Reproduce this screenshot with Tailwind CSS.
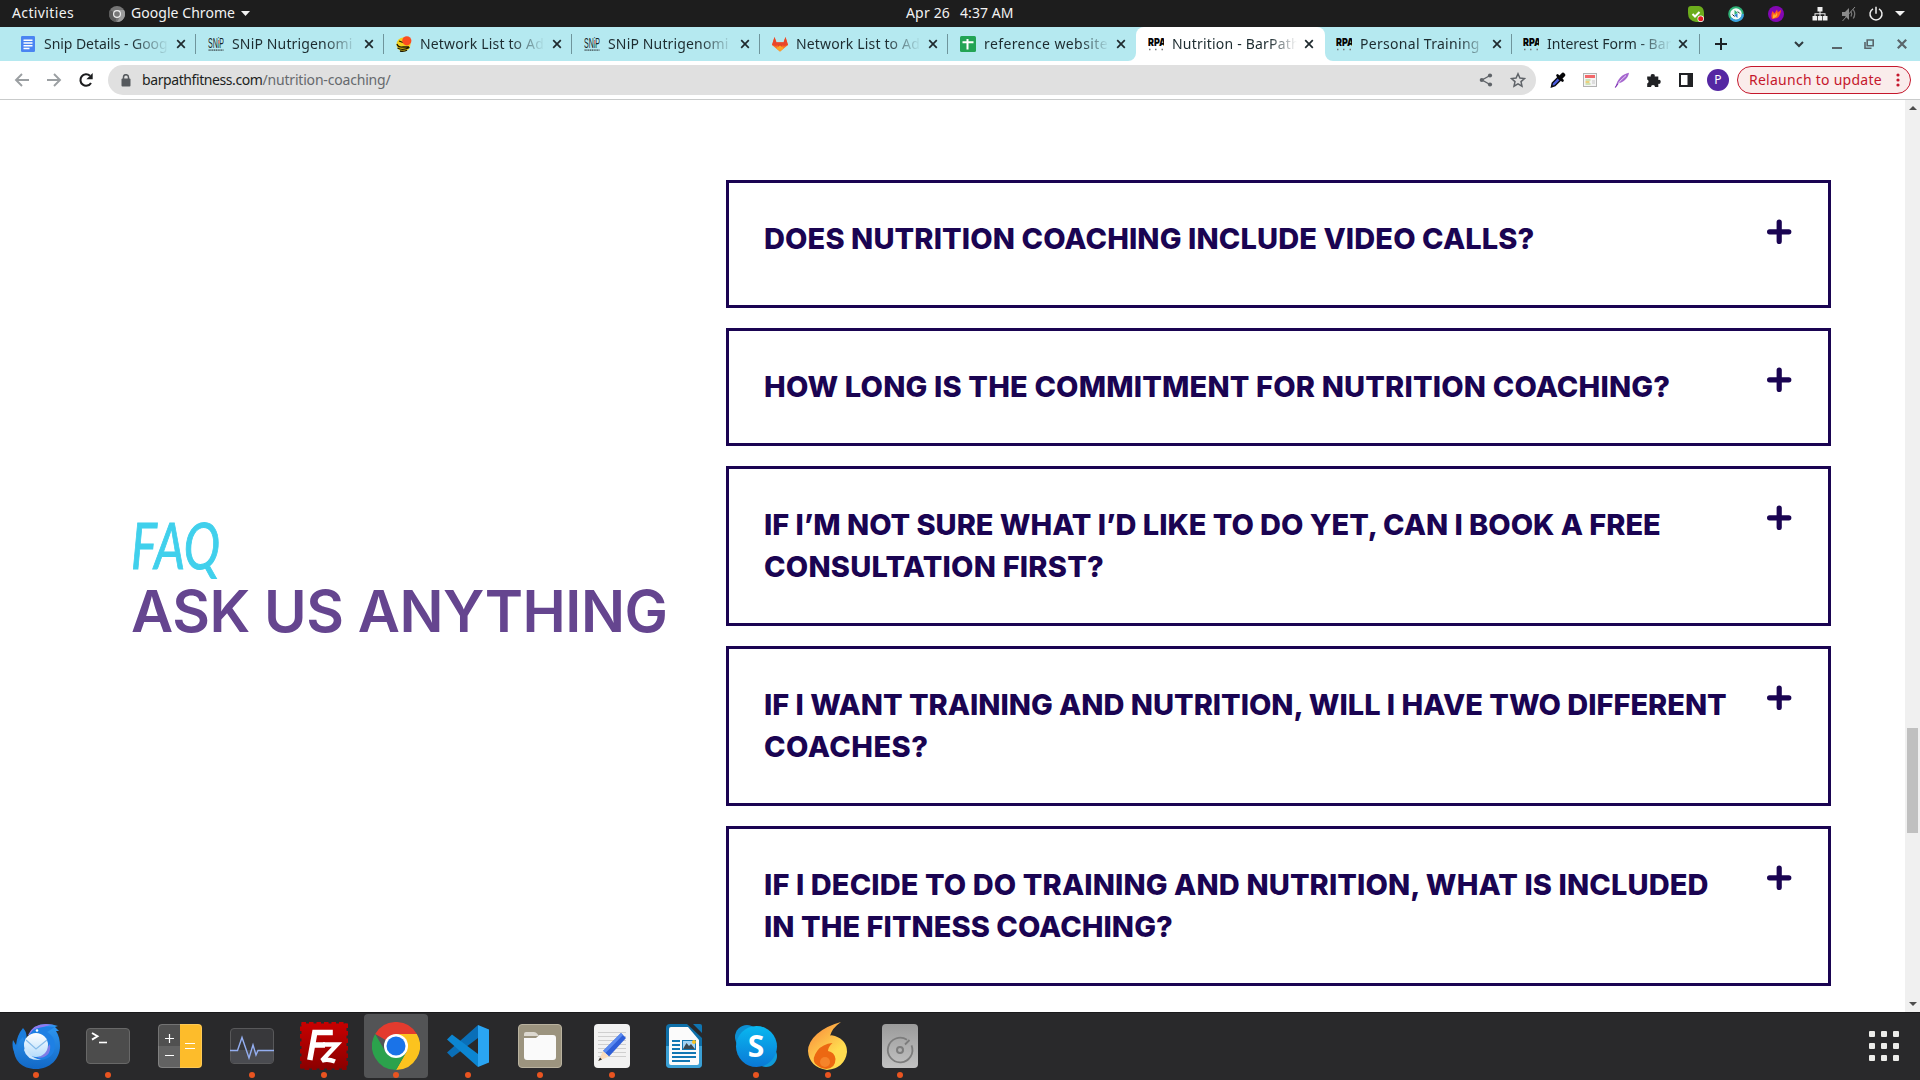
<!DOCTYPE html>
<html lang="en">
<head>
<meta charset="utf-8">
<title>Nutrition - BarPath Fitness</title>
<script src="https://cdn.jsdelivr.net/npm/@tailwindcss/browser@4"></script>
</head>
<body class="flex h-screen w-screen flex-col overflow-hidden bg-white font-['Noto_Sans',sans-serif] text-[14px]">

<!-- shared symbols -->
<svg class="hidden">
  <symbol id="x" viewBox="0 0 10 10"><path d="M1.2 1.2l7.6 7.6M8.800 1.2l-7.600 7.600" stroke="#1f2a2e" stroke-width="1.7" fill="none"/></symbol>
  <symbol id="plus" viewBox="0 0 25 25"><path d="M12.200 3v19.500M2.600 12.800h19.200" stroke="#1a0452" stroke-width="5.200" stroke-linecap="round"/></symbol>
  <symbol id="snip" viewBox="0 0 16 16">
    <text x="0" y="11.500" font-family="Liberation Sans" font-size="14" textLength="16" lengthAdjust="spacingAndGlyphs" fill="#16262a">SNiP</text>
    <path d="M11 4.500v3" stroke="#e58a78" stroke-width="1.500"/><path d="M10.500 8.500l2 2" stroke="#5fbf9b" stroke-width="1.500"/>
    <path d="M.5 14.200h15" stroke="#5c7479" stroke-width="1.800" stroke-dasharray="1.300 .5"/>
  </symbol>
  <symbol id="bpa" viewBox="0 0 16 16">
    <text x="0" y="9.500" font-family="Inter" font-weight="900" font-size="11" textLength="18" lengthAdjust="spacingAndGlyphs" fill="#050505">RPA</text>
    <path d="M1 13.500h1.500M7 13.500h1.500M13.500 13.500h1.500" stroke="#777" stroke-width="1.500"/>
  </symbol>
</svg>

<!-- desktop top bar -->
<header class="flex h-[27px] shrink-0 items-center bg-[#1d1d1d] text-[#f2f2f2]">
  <div class="flex w-[906px] items-center">
    <span class="-mt-0.5 ml-3 w-[97px] tracking-[0.37px]">Activities</span>
    <svg class="mr-[6px] size-[16px] shrink-0" viewBox="0 0 16 16"><circle cx="8" cy="8" r="8" fill="#767676"/><path d="M8 8L1 4a8 8 0 0 0 5.500 11.900z" fill="#5c5c5c"/><path d="M8 4h7a8 8 0 0 1-7 12l3.500-6z" fill="#9b9b9b"/><circle cx="8" cy="8" r="4" fill="#eee"/><circle cx="8" cy="8" r="2.800" fill="#777"/></svg>
    <span class="-mt-0.5 tracking-[0.05px]">Google Chrome</span>
    <svg class="ml-[6px] h-[5px] w-[9px]" viewBox="0 0 9 5"><path d="M0 0h9L4.500 5z" fill="#f2f2f2"/></svg>
  </div>
  <div class="-mt-0.5 flex gap-[10px]"><span class="tracking-[0.17px]">Apr 26</span><span class="tracking-[0.06px]">4:37 AM</span></div>
  <div class="flex flex-1 items-center justify-end pr-[15px]">
    <svg class="mr-[24px] size-[16px]" viewBox="0 0 16 16"><path d="M3 0h8q5 1 5 7v5q-1 4-5 4H8Q0 15 0 7V3Q0 0 3 0z" fill="#6cac1c"/><path d="M4.500 8l2.500 2.500L11.500 6" stroke="#fff" stroke-width="2" fill="none"/><circle cx="12.700" cy="12.700" r="3.200" fill="#fff"/><circle cx="12.700" cy="12.700" r="2.500" fill="#e51c23"/></svg>
    <svg class="mr-[24px] size-[16px]" viewBox="0 0 16 16"><circle cx="8" cy="8" r="6.800" fill="#f5fafa" stroke="#2fb277" stroke-width="2"/><path d="M14.800 8a6.800 6.800 0 0 1-12 4.300" fill="none" stroke="#3b9fe0" stroke-width="2.200"/><path d="M6.500 4l3.500 3-3.500 1.500z" fill="#2fb277"/><path d="M9.500 12L6 9l3.500-1.500z" fill="#2a86d6"/><path d="M4.500 8.500l2 2M9.800 5.500l2 2" stroke="#222" stroke-width="1"/></svg>
    <svg class="mr-[28px] size-[16px]" viewBox="0 0 16 16"><circle cx="8" cy="8" r="8" fill="#8407b4"/><path d="M4 13q-1.500-4 .5-8l2 2.500L9 3.500l.8 2.800L13 4q-.5 6-4 8z" fill="#ff5a1f"/><path d="M5 12.500q-.5-3 1-5l1 2 2-3q1 4-2 5z" fill="#ffb52e"/></svg>
    <svg class="mr-[13px] size-[16px]" viewBox="0 0 16 16" fill="#eee"><rect x="5.500" y="1" width="5" height="4.500"/><rect x="0.500" y="10" width="4.500" height="4.500"/><rect x="5.800" y="10" width="4.500" height="4.500" /><rect x="11" y="10" width="4.500" height="4.500"/><path d="M7.500 5h1v5h-1zM2.500 7.300h11v1h-11zM2.500 7.300h1V10h-1zM12.500 7.300h1V10h-1z"/></svg>
    <svg class="mr-[11px] size-[16px]" viewBox="0 0 16 16"><path d="M1 6h3l4-4v12l-4-4H1z" fill="#8a8a8a"/><path d="M10 5.500q1.500 2.500 0 5M12.200 3.500q3 4.500 0 9" fill="none" stroke="#777" stroke-width="1.300"/><path d="M1.500 15L14 1" stroke="#8a8a8a" stroke-width="1"/></svg>
    <svg class="mr-[11px] size-[16px]" viewBox="0 0 16 16"><path d="M5 2.800a6 6 0 1 0 6 0M8 .8v7" fill="none" stroke="#eee" stroke-width="1.500"/></svg>
    <svg class="h-[5px] w-[10px]" viewBox="0 0 10 5"><path d="M0 0h10L5 5z" fill="#f2f2f2"/></svg>
  </div>
</header>

<!-- tab strip -->
<nav class="flex h-[34px] shrink-0 bg-[#b5e9f0] pl-2 text-[#1d2c30]">
  <div class="flex w-[188px] shrink-0 items-center pl-3">
    <svg class="size-4 shrink-0" viewBox="0 0 16 16"><rect x="1" width="14" height="16" rx="1.200" fill="#4a84f2"/><path d="M3.500 4.200h9M3.500 7h9M3.500 9.800h9M3.500 12.500h6" stroke="#fff" stroke-width="1.400"/></svg>
    <span class="-mt-0.5 ml-2 w-[125px] overflow-hidden whitespace-nowrap tracking-[-0.06px] [mask-image:linear-gradient(to_right,black_70%,transparent)]">Snip Details - Goog</span>
    <svg class="ml-[7px] size-[10px] shrink-0"><use href="#x"/></svg><i class="ml-auto h-5 w-px bg-[#6f959c]"></i>
  </div>
  <div class="flex w-[188px] shrink-0 items-center pl-3">
    <svg class="size-4 shrink-0"><use href="#snip"/></svg>
    <span class="-mt-0.5 ml-2 w-[125px] overflow-hidden whitespace-nowrap tracking-[0.15px] [mask-image:linear-gradient(to_right,black_74%,transparent)]">SNiP Nutrigenomi</span>
    <svg class="ml-[7px] size-[10px] shrink-0"><use href="#x"/></svg><i class="ml-auto h-5 w-px bg-[#6f959c]"></i>
  </div>
  <div class="flex w-[188px] shrink-0 items-center pl-3">
    <svg class="size-4 shrink-0" viewBox="0 0 16 16"><circle cx="7.500" cy="8.500" r="7" fill="#f3d01c"/><path d="M1 8q1 3.500 6 3h6M1.500 12q5 3 12-.5M4 15q4 .8 7-.8M3 5l4 1.500" stroke="#1c1a05" stroke-width="1.300" fill="none"/><circle cx="10.800" cy="4.800" r="4.600" fill="#fb4c20"/></svg>
    <span class="-mt-0.5 ml-2 w-[125px] overflow-hidden whitespace-nowrap tracking-[0.16px] [mask-image:linear-gradient(to_right,black_72%,transparent)]">Network List to Ad</span>
    <svg class="ml-[7px] size-[10px] shrink-0"><use href="#x"/></svg><i class="ml-auto h-5 w-px bg-[#6f959c]"></i>
  </div>
  <div class="flex w-[188px] shrink-0 items-center pl-3">
    <svg class="size-4 shrink-0"><use href="#snip"/></svg>
    <span class="-mt-0.5 ml-2 w-[125px] overflow-hidden whitespace-nowrap tracking-[0.15px] [mask-image:linear-gradient(to_right,black_74%,transparent)]">SNiP Nutrigenomi</span>
    <svg class="ml-[7px] size-[10px] shrink-0"><use href="#x"/></svg><i class="ml-auto h-5 w-px bg-[#6f959c]"></i>
  </div>
  <div class="flex w-[188px] shrink-0 items-center pl-3">
    <svg class="size-4 shrink-0" viewBox="0 0 16 16"><path d="M0 9L2.500 1l2 5.500h7l2-5.500L16 9l-8 6.500z" fill="#fc6d26"/><path d="M4.500 6.500h7L8 15.500z" fill="#e24329"/><path d="M0 9L2.500 1l2 5.500h7l2-5.500L16 9l-4 1-4-2-4 2z" fill="#e8452b"/><path d="M4 12.200l4-2.700 4 2.700-4 3.300z" fill="#fca326"/></svg>
    <span class="-mt-0.5 ml-2 w-[125px] overflow-hidden whitespace-nowrap tracking-[0.16px] [mask-image:linear-gradient(to_right,black_72%,transparent)]">Network List to Ad</span>
    <svg class="ml-[7px] size-[10px] shrink-0"><use href="#x"/></svg><i class="ml-auto h-5 w-px bg-[#6f959c]"></i>
  </div>
  <div class="flex w-[188px] shrink-0 items-center pl-3">
    <svg class="size-4 shrink-0" viewBox="0 0 16 16"><rect width="16" height="16" rx="1.500" fill="#23a455"/><path d="M7.500 3v10.500M2.500 6.300h11" stroke="#fff" stroke-width="2"/></svg>
    <span class="-mt-0.5 ml-2 w-[125px] overflow-hidden whitespace-nowrap tracking-[0.4px] [mask-image:linear-gradient(to_right,black_78%,transparent)]">reference website</span>
    <svg class="ml-[7px] size-[10px] shrink-0"><use href="#x"/></svg>
  </div>
  <div class="relative flex w-[189px] shrink-0 items-center rounded-t-lg bg-white pl-3">
    <svg class="absolute bottom-0 -left-2 size-2" viewBox="0 0 8 8"><path d="M8 0v8H0a8 8 0 0 0 8-8z" fill="#fff"/></svg>
    <svg class="absolute -right-2 bottom-0 size-2" viewBox="0 0 8 8"><path d="M0 0v8h8a8 8 0 0 1-8-8z" fill="#fff"/></svg>
    <svg class="size-4 shrink-0"><use href="#bpa"/></svg>
    <span class="-mt-0.5 ml-2 w-[125px] overflow-hidden whitespace-nowrap tracking-[0.2px] [mask-image:linear-gradient(to_right,black_78%,transparent)]">Nutrition - BarPath</span>
    <svg class="ml-[7px] size-[10px] shrink-0"><use href="#x"/></svg>
  </div>
  <div class="flex w-[187px] shrink-0 items-center pl-[11px]">
    <svg class="size-4 shrink-0"><use href="#bpa"/></svg>
    <span class="-mt-0.5 ml-2 w-[125px] overflow-hidden whitespace-nowrap tracking-[0.3px] [mask-image:linear-gradient(to_right,black_80%,transparent)]">Personal Training</span>
    <svg class="ml-[7px] size-[10px] shrink-0"><use href="#x"/></svg><i class="ml-auto h-5 w-px bg-[#6f959c]"></i>
  </div>
  <div class="flex w-[188px] shrink-0 items-center pl-[11px]">
    <svg class="size-4 shrink-0"><use href="#bpa"/></svg>
    <span class="-mt-0.5 ml-2 w-[125px] overflow-hidden whitespace-nowrap [mask-image:linear-gradient(to_right,black_72%,transparent)]">Interest Form - Bar</span>
    <svg class="ml-[6px] size-[10px] shrink-0"><use href="#x"/></svg><i class="ml-auto h-5 w-px bg-[#6f959c]"></i>
  </div>
  <div class="flex flex-1 items-center pl-[15px]">
    <svg class="size-3" viewBox="0 0 12 12"><path d="M6 0v12M0 6h12" stroke="#1d2327" stroke-width="2"/></svg>
    <svg class="ml-[67px] h-[7px] w-[10px]" viewBox="0 0 10 7"><path d="M1 1l4 4 4-4" fill="none" stroke="#2f3b3f" stroke-width="2"/></svg>
    <svg class="ml-[28px] h-[10px] w-[10px]" viewBox="0 0 10 10"><path d="M0 9h10" stroke="#59656a" stroke-width="2"/></svg>
    <svg class="ml-[22px] h-[10px] w-[10px]" viewBox="0 0 10 10"><path d="M3.200 1h6v5.800h-6zM1 3v6.200h6.500" fill="none" stroke="#59656a" stroke-width="1.600"/></svg>
    <svg class="ml-[23px] size-[10px]" viewBox="0 0 10 10"><path d="M.8.8l8.400 8.400M9.200.8L.8 9.200" stroke="#59656a" stroke-width="2.200"/></svg>
  </div>
</nav>

<!-- toolbar -->
<div class="flex h-[39px] shrink-0 items-center border-b border-[#c9cbcb] bg-white pl-[14px]">
  <svg class="size-4" viewBox="0 0 16 16"><path d="M15 8H2.500M8 2L2 8l6 6" fill="none" stroke="#9b9fa2" stroke-width="1.900"/></svg>
  <svg class="ml-4 size-4" viewBox="0 0 16 16"><path d="M1 8h12.500M8 2l6 6-6 6" fill="none" stroke="#9b9fa2" stroke-width="1.900"/></svg>
  <svg class="ml-4 size-4" viewBox="0 0 16 16"><path d="M13 11a5.700 5.700 0 1 1-1-7.200" fill="none" stroke="#1b1c1e" stroke-width="2.100"/><path d="M14.700 1v6.300H8.400z" fill="#1b1c1e"/></svg>
  <div class="ml-[14px] flex h-[30px] w-[1428px] shrink-0 items-center rounded-full bg-[#e0e0e0] pl-[13px] pr-[10px]">
    <svg class="h-[13px] w-[10px]" viewBox="0 0 10 13"><rect x=".5" y="4.500" width="9" height="8" rx="1" fill="#565a5e"/><path d="M2.500 5V3.200a2.500 2.500 0 0 1 5 0V5" fill="none" stroke="#565a5e" stroke-width="1.500"/></svg>
    <span class="-mt-0.5 ml-[11px] tracking-[-0.41px] text-[#1d1f21]">barpathfitness.com</span><span class="-mt-0.5 flex-1 tracking-[-0.19px] text-[#66696d]">/nutrition-coaching/</span>
    <svg class="size-[14px]" viewBox="0 0 14 14"><path d="M11 2.500L3 7l8 4.500" fill="none" stroke="#5f6368" stroke-width="1.400"/><g fill="#5f6368"><circle cx="11" cy="2.500" r="2.100"/><circle cx="2.800" cy="7" r="2.100"/><circle cx="11" cy="11.500" r="2.100"/></g></svg>
    <svg class="ml-[17px] size-4" viewBox="0 0 16 16"><path d="M8 1.800l1.900 4.300 4.600.4-3.500 3.100 1 4.600-4-2.400-4 2.400 1-4.600L1.500 6.500l4.600-.4z" fill="none" stroke="#5f6368" stroke-width="1.500"/></svg>
  </div>
  <svg class="ml-[14px] size-4" viewBox="0 0 16 16"><path d="M1.500 14.800l.8-3.800L8.500 4.800l2.700 2.700-6.200 6.200z" fill="#4a5be0" stroke="#0a0a12" stroke-width="1.500"/><path d="M7.500 3.500l5 5" stroke="#050508" stroke-width="2.600" stroke-linecap="round"/><path d="M10 6L13 3" stroke="#050508" stroke-width="4.500" stroke-linecap="round"/></svg>
  <svg class="ml-4 size-4" viewBox="0 0 16 16"><rect x="1.500" y="1.500" width="13" height="13" fill="#f4f4f4" stroke="#b2b2b2"/><path d="M3 4.500h10" stroke="#f2686a" stroke-width="3"/><path d="M3.500 8h5M3.500 12h5" stroke="#a5cf7a" stroke-width="1.200"/><path d="M3.500 10h4" stroke="#e8b52c" stroke-width="1.200"/><path d="M10 8h3v4h-3z" fill="#ddd"/></svg>
  <svg class="ml-4 size-4" viewBox="0 0 16 16"><path d="M2 14C3 8 8 2 15 .8 14 7 9 10.500 4 11.500z" fill="#a566cf"/><path d="M1.500 15.500Q5 9 12 3.500" stroke="#ead7f5" stroke-width="1" fill="none"/><path d="M1.200 15.500L4 11.500" stroke="#7b2fb0" stroke-width="1.200"/></svg>
  <svg class="ml-4 size-4" viewBox="0 0 16 16"><path d="M1.200 4.500h3.600a2 2 0 1 1 3.900 0h3.600v3.400a2 2 0 1 1 0 3.900V15H9a2 2 0 0 0-4 0H1.200v-3.600a2 2 0 0 0 0-3.800z" fill="#202124"/></svg>
  <svg class="ml-4 size-4" viewBox="0 0 16 16"><rect x="2" y="2" width="12" height="12" fill="#fff" stroke="#202124" stroke-width="2"/><path d="M9.500 2H14v12H9.500z" fill="#202124"/></svg>
  <div class="ml-[13px] flex size-[22px] items-center justify-center rounded-full bg-[#5527a3] text-[12px] text-white">P</div>
  <div class="ml-2 flex h-7 w-[174px] items-center rounded-full border border-[#c5172c] bg-[#faeceb] pl-[11px] text-[#c5172c]">
    <span class="-mt-0.5 tracking-[0.26px]">Relaunch to update</span>
    <svg class="ml-[14px] h-[14px] w-[4px]" viewBox="0 0 4 14" fill="#c5172c"><circle cx="2" cy="2" r="1.600"/><circle cx="2" cy="7" r="1.600"/><circle cx="2" cy="12" r="1.600"/></svg>
  </div>
</div>

<!-- page -->
<main class="flex min-h-0 flex-1">
  <section class="flex w-[726px] flex-col pt-[417px] pl-[131px]">
    <p class="h-[67px] origin-left scale-x-[0.76] font-['Lato',sans-serif] text-[64px] leading-[56px] text-[#40d0ec] italic [-webkit-text-stroke:1px_#40d0ec]">FAQ</p>
    <h1 class="h-[54px] font-['Inter',sans-serif] text-[58px] leading-[54px] font-semibold tracking-[-0.44px] whitespace-nowrap text-[#65458f]">ASK US ANYTHING</h1>
  </section>
  <section class="flex w-[1105px] flex-col gap-5 pt-[80px] font-['Inter',sans-serif] text-[29px] leading-[42px] font-extrabold whitespace-nowrap text-[#1a0452]">
    <div class="flex h-[128px] shrink-0 justify-between border-3 border-[#1a0452] pt-[35px] pr-[36px] pl-[35px]">
      <h2 class="tracking-[0.11px]">DOES NUTRITION COACHING INCLUDE VIDEO CALLS?</h2>
      <svg class="mt-px size-[25px]"><use href="#plus"/></svg>
    </div>
    <div class="flex h-[118px] shrink-0 justify-between border-3 border-[#1a0452] pt-[35px] pr-[36px] pl-[35px]">
      <h2 class="tracking-[0.17px]">HOW LONG IS THE COMMITMENT FOR NUTRITION COACHING?</h2>
      <svg class="mt-px size-[25px]"><use href="#plus"/></svg>
    </div>
    <div class="flex h-[160px] shrink-0 justify-between border-3 border-[#1a0452] pt-[35px] pr-[36px] pl-[35px]">
      <h2 class="tracking-[-0.03px]">IF I’M NOT SURE WHAT I’D LIKE TO DO YET, CAN I BOOK A FREE<br><span class="tracking-[0.22px]">CONSULTATION FIRST?</span></h2>
      <svg class="mt-px size-[25px]"><use href="#plus"/></svg>
    </div>
    <div class="flex h-[160px] shrink-0 justify-between border-3 border-[#1a0452] pt-[35px] pr-[36px] pl-[35px]">
      <h2 class="tracking-[-0.02px]">IF I WANT TRAINING AND NUTRITION, WILL I HAVE TWO DIFFERENT<br><span class="tracking-[0.5px]">COACHES?</span></h2>
      <svg class="mt-px size-[25px]"><use href="#plus"/></svg>
    </div>
    <div class="flex h-[160px] shrink-0 justify-between border-3 border-[#1a0452] pt-[35px] pr-[36px] pl-[35px]">
      <h2 class="tracking-[0.11px]">IF I DECIDE TO DO TRAINING AND NUTRITION, WHAT IS INCLUDED<br><span class="tracking-[0.05px]">IN THE FITNESS COACHING?</span></h2>
      <svg class="mt-px size-[25px]"><use href="#plus"/></svg>
    </div>
  </section>
  <aside class="ml-auto flex w-[15px] flex-col items-center bg-[#f0f0f0] pt-[6px] pb-[6px]">
    <svg class="h-[4px] w-[8px]" viewBox="0 0 8 4"><path d="M0 4h8L4 0z" fill="#4d4d4d"/></svg>
    <div class="mt-[618px] h-[105px] w-[11px] bg-[#c0c0c0]"></div>
    <svg class="mt-auto h-[4px] w-[8px]" viewBox="0 0 8 4"><path d="M0 0h8L4 4z" fill="#4d4d4d"/></svg>
  </aside>
</main>

<!-- dock -->
<footer class="flex h-[68px] shrink-0 border-t border-[#1a1a1c] bg-[#29292b]">
  <div class="flex w-[72px] flex-col items-center pt-[9px]">
    <svg class="size-12" viewBox="0 0 48 48"><defs><linearGradient id="tb" x1="0" y1="0" x2="0" y2="1"><stop offset="0" stop-color="#2f98f2"/><stop offset="1" stop-color="#1268c6"/></linearGradient><linearGradient id="tw" x1="0" y1="0" x2="0" y2="1"><stop offset="0" stop-color="#fff"/><stop offset="1" stop-color="#b5dcfb"/></linearGradient></defs>
      <path d="M11 6q5 5 3 13l-2 8-7 8Q-1 27 1 18l3 5Q5 13 11 6z" fill="#1b7ddd"/>
      <path d="M17 13Q21 2 34 2q6 0 12 2l-3 1 4 4-3 0q4 6 4 15c0 13-10 23-24 23C10 47 1 38 2 25l3 4q0-9 6-14l2 6z" fill="url(#tb)"/>
      <path d="M16 13Q21 2 34 2l8 1q-9 0-14 5-5 5-12 5z" fill="#8f7af0"/>
      <path d="M17 13l4-5q10-5 22-3l-8 5q8 5 8 13 0 13-14 15-12 0-15-11z" fill="#1e80e4"/>
      <path d="M38 22q2 14-13 14 8-3 9-9z" fill="#7e7ce6"/>
      <circle cx="24" cy="23" r="12" fill="url(#tw)"/><path d="M14 24q0 10 15 14-14 1-17-10z" fill="#cfe7fc"/><path d="M14 18l10 9 11-9" fill="none" stroke="#87bce9" stroke-width="1.200"/><circle cx="25" cy="8.500" r="1.300" fill="#fff"/></svg>
    <i class="mt-[2px] size-[6px] rounded-full bg-[#e95420]"></i>
  </div>
  <div class="flex w-[72px] flex-col items-center pt-[9px]">
    <svg class="size-12" viewBox="0 0 48 48"><rect x="2.500" y="6.500" width="43" height="35" rx="3.500" fill="#4c4c4c" stroke="#686868"/><path d="M8 11l5.500 3.300L8 17.600" fill="none" stroke="#fff" stroke-width="1.900"/><path d="M15 20.500h8" stroke="#fff" stroke-width="1.600"/></svg>
    <i class="mt-[2px] size-[6px] rounded-full bg-[#e95420]"></i>
  </div>
  <div class="flex w-[72px] flex-col items-center pt-[9px]">
    <svg class="size-12" viewBox="0 0 48 48"><path d="M24 2H6a4 4 0 0 0-4 4v18h22z" fill="#505050"/><path d="M24 24H2v18a4 4 0 0 0 4 4h18z" fill="#626262"/><path d="M24 2h18a4 4 0 0 1 4 4v36a4 4 0 0 1-4 4H24z" fill="#fdbc2b"/><rect x="2.500" y="2.500" width="43" height="43" rx="3.500" fill="none" stroke="#fff" stroke-opacity=".2"/><path d="M13.500 12v9M9 16.500h9M9 33.500h9" stroke="#fff" stroke-width="1.200"/><path d="M29 21.500h10M29 26.500h10" stroke="#fff" stroke-width="1.200"/></svg>
  </div>
  <div class="flex w-[72px] flex-col items-center pt-[9px]">
    <svg class="size-12" viewBox="0 0 48 48"><rect x="2.500" y="6.500" width="43" height="35" rx="3.500" fill="#38383b" stroke="#58585a"/><path d="M3 28h42v10a3 3 0 0 1-3 3H6a3 3 0 0 1-3-3z" fill="#4a4b50"/><path d="M2 28.500h7.500l4.500-13 7 20.500 4-13 3 10 2-4.500H46" fill="none" stroke="#94aef0" stroke-width="1.400"/></svg>
    <i class="mt-[2px] size-[6px] rounded-full bg-[#e95420]"></i>
  </div>
  <div class="flex w-[72px] flex-col items-center pt-[9px]">
    <svg class="size-12" viewBox="0 0 48 48"><defs><linearGradient id="fz" x1="0" y1="0" x2="0" y2="1"><stop offset="0" stop-color="#c70000"/><stop offset="1" stop-color="#8c0000"/></linearGradient></defs><rect x="1.500" y="1.500" width="45" height="45" fill="url(#fz)"/><rect x="1.500" y="1.500" width="45" height="45" fill="none" stroke="url(#fz)" stroke-width="3.400" stroke-dasharray="4.500 3"/><path d="M9.800 38L14.800 10.500h18M12 23H25" fill="none" stroke="#fff" stroke-width="5.500"/><path d="M23 22.500h14L22 38.500q6-2 13 1" fill="none" stroke="#fff" stroke-width="4.500"/></svg>
    <i class="mt-[2px] size-[6px] rounded-full bg-[#e95420]"></i>
  </div>
  <div class="flex w-[72px] flex-col items-center pt-px">
    <div class="flex h-[64px] w-[64px] flex-col items-center rounded bg-[#535456] pt-[8px]">
    <svg class="size-12 shrink-0" viewBox="0 0 48 48"><path d="M24 24L3.200 12A24 24 0 0 1 44.800 12z" fill="#e33b2e"/><path d="M24 24L34.400 30 24 48A24 24 0 0 0 44.800 12H24z" fill="#fcc31e"/><path d="M24 48L34.400 30 13.600 30 3.200 12A24 24 0 0 0 24 48z" fill="#2ba24c"/><circle cx="24" cy="24" r="12" fill="#fff"/><circle cx="24" cy="24" r="9.500" fill="#1a73e8"/></svg>
    <i class="mt-[2px] size-[6px] shrink-0 rounded-full bg-[#e95420]"></i>
    </div>
  </div>
  <div class="flex w-[72px] flex-col items-center pt-[9px]">
    <svg class="size-12" viewBox="0 0 48 48"><path d="M3 30.500L34 3v13L8 35.500z" fill="#0a6fb8"/><path d="M3 17.500L34 45V32L8 12.500z" fill="#0c86d2"/><path d="M34 3l11 4.500v33L34 45z" fill="#2aa5f3"/></svg>
    <i class="mt-[2px] size-[6px] rounded-full bg-[#e95420]"></i>
  </div>
  <div class="flex w-[72px] flex-col items-center pt-[9px]">
    <svg class="size-12" viewBox="0 0 48 48"><rect x="2.500" y="2.500" width="43" height="43" rx="3.500" fill="#9c947f" stroke="#b9b29f"/><path d="M8 12q0-2 2-2h8q2 0 3 1.500l2 2.500h-15z" fill="#ddd9d0"/><path d="M8 16h12l3.500-3H37q3 0 3 3v19q0 3-3 3H11q-3 0-3-3z" fill="#fafafa"/></svg>
    <i class="mt-[2px] size-[6px] rounded-full bg-[#e95420]"></i>
  </div>
  <div class="flex w-[72px] flex-col items-center pt-[9px]">
    <svg class="size-12" viewBox="0 0 48 48"><rect x="6" y="2" width="36" height="44" rx="4" fill="#f2f2f2"/><path d="M10 10.500h28M10 14.500h28M10 18.500h28M10 22.500h28M10 26.500h28M10 30.500h28M10 34.500h28" stroke="#cfcfcf"/><path d="M33 11l5 5-17 18.500-6-5.500z" fill="#2f5fd8"/><path d="M33 11l2 2-17.500 18-2.500-2z" fill="#5b8af0"/><path d="M15 29l6 5.500L10.500 39z" fill="#fbdcbc"/><path d="M12 35.500l2 2-3.800 1.500z" fill="#333"/></svg>
    <i class="mt-[2px] size-[6px] rounded-full bg-[#e95420]"></i>
  </div>
  <div class="flex w-[72px] flex-col items-center pt-[9px]">
    <svg class="size-12" viewBox="0 0 48 48"><path d="M10 2h17l15 14v26a4 4 0 0 1-4 4H10a4 4 0 0 1-4-4V6a4 4 0 0 1 4-4z" fill="#0e6fa8"/><path d="M6 24h36v18a4 4 0 0 1-4 4H10a4 4 0 0 1-4-4z" fill="#3ba0d5"/><path d="M33 2h7q2 0 2 2v7z" fill="#0f75b2"/><path d="M11 5h17l11 13v23q0 2-2 2H11q-2 0-2-2V7q0-2 2-2z" fill="#fbfbfb"/><path d="M12 19h8M12 23h8M12 27h8M12 31h24M12 35h24M12 39h18" stroke="#1277b3" stroke-width="2"/><rect x="22.500" y="18.500" width="13" height="9" fill="#a5d4f3" stroke="#1277b3"/><path d="M23 27l3.500-6 2.500 3 2-2 4 5z" fill="#3d4a52"/><circle cx="34" cy="20" r="2" fill="#f8c321"/></svg>
  </div>
  <div class="flex w-[72px] flex-col items-center pt-[9px]">
    <svg class="size-12" viewBox="0 0 48 48"><defs><linearGradient id="sk" x1="0" y1="0" x2="0" y2="1"><stop offset="0" stop-color="#09b8f0"/><stop offset="1" stop-color="#0a78d6"/></linearGradient></defs><circle cx="15" cy="15" r="12" fill="#0d8fd2"/><circle cx="34" cy="34" r="11" fill="#109ad8"/><circle cx="24.500" cy="24.500" r="20.500" fill="url(#sk)"/><text x="24" y="35" text-anchor="middle" font-family="Open Sans" font-weight="700" font-size="30" fill="#fff">S</text></svg>
    <i class="mt-[2px] size-[6px] rounded-full bg-[#e95420]"></i>
  </div>
  <div class="flex w-[72px] flex-col items-center pt-[9px]">
    <svg class="size-12" viewBox="0 0 48 48"><defs><linearGradient id="fl" x1="0" y1="0" x2=".7" y2="1"><stop offset=".25" stop-color="#fb9f40"/><stop offset=".75" stop-color="#ffdc50"/></linearGradient></defs><path d="M37 0Q22 4 13 12 4 20 4 29 5 45 23 48 41 46 43 30 43 18 31 14q-5-1.500-5 0 2-8 11-14z" fill="url(#fl)"/><path d="M28.500 21q-10 1-15 7.500-6 8-2.500 13 5 5 11.500 5.500 9-1 9-10-1-7-7.500-8 0-4 4.500-8z" fill="#ec6812"/><circle cx="21" cy="40" r="5" fill="#f5842a"/></svg>
    <i class="mt-[2px] size-[6px] rounded-full bg-[#e95420]"></i>
  </div>
  <div class="flex w-[72px] flex-col items-center pt-[9px]">
    <svg class="size-12" viewBox="0 0 48 48"><defs><linearGradient id="dk" x1="0" y1="0" x2="0" y2="1"><stop offset="0" stop-color="#9b9b9b"/><stop offset="1" stop-color="#c2c2c2"/></linearGradient></defs><rect x="6" y="2" width="36" height="44" rx="4" fill="url(#dk)"/><path d="M31 17.800a12.300 12.300 0 1 0 4.500 5.500M29 22.500l4.500-4.500" fill="none" stroke="#7c7c7c" stroke-width="1.800"/><circle cx="24" cy="28" r="3" fill="none" stroke="#7c7c7c" stroke-width="2"/></svg>
    <i class="mt-[2px] size-[6px] rounded-full bg-[#e95420]"></i>
  </div>
  <div class="mt-[18px] mr-[21px] ml-auto grid h-[30px] w-[30px] grid-cols-3 gap-[6px]">
    <i class="size-[6px] rounded-[1px] bg-[#ececea]"></i><i class="size-[6px] rounded-[1px] bg-[#ececea]"></i><i class="size-[6px] rounded-[1px] bg-[#ececea]"></i>
    <i class="size-[6px] rounded-[1px] bg-[#ececea]"></i><i class="size-[6px] rounded-[1px] bg-[#ececea]"></i><i class="size-[6px] rounded-[1px] bg-[#ececea]"></i>
    <i class="size-[6px] rounded-[1px] bg-[#ececea]"></i><i class="size-[6px] rounded-[1px] bg-[#ececea]"></i><i class="size-[6px] rounded-[1px] bg-[#ececea]"></i>
  </div>
</footer>
</body>
</html>
